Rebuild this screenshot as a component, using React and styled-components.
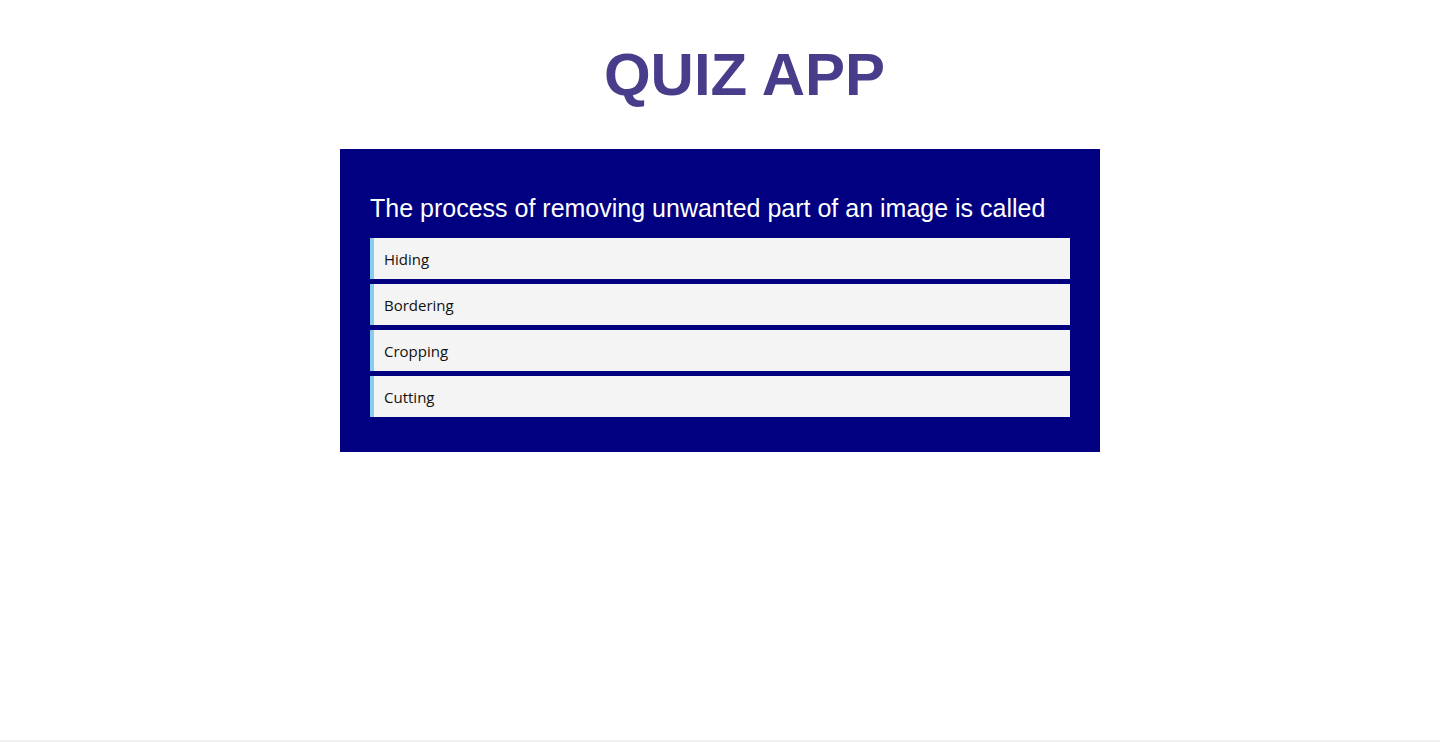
import React from 'react'
import styled, { createGlobalStyle } from 'styled-components'

const GlobalStyle = createGlobalStyle`
    body {
        margin: 0;
        background: #fff;
        font-family: "Liberation Sans", Arial, sans-serif;
    }
`

const options = ['Hiding', 'Bordering', 'Cropping', 'Cutting']

function App() {
    return (
        <Page>
            <GlobalStyle />
            <Title>QUIZ APP</Title>
            <Card>
                <Question>The process of removing unwanted part of an image is called</Question>
                <OptionList>
                    {options.map((o) => (
                        <Option key={o}>{o}</Option>
                    ))}
                </OptionList>
            </Card>
        </Page>
    )
}

const Page = styled.div`
    min-height: 100vh;
    box-sizing: border-box;
    border-bottom: 2px solid #f0f0f0;
    padding-top: 1px;
`

const Title = styled.h1`
    margin: 39px 0 40px;
    padding-left: 49px;
    text-align: center;
    font-family: "Liberation Sans", Arial, sans-serif;
    font-size: 60px;
    font-weight: bold;
    color: #483d8b;
`

const Card = styled.div`
    width: 760px;
    margin: 0 auto;
    box-sizing: border-box;
    padding: 30px 30px 35px;
    background: #000080;
`

const Question = styled.h2`
    margin: 15px 0 15px;
    font-family: "Liberation Sans", Arial, sans-serif;
    font-size: 25px;
    font-weight: normal;
    color: #fff;
`

const OptionList = styled.div`
    display: flex;
    flex-direction: column;
    gap: 5px;
`

const Option = styled.div`
    height: 41px;
    box-sizing: border-box;
    display: flex;
    align-items: center;
    padding: 0 10px;
    background: #f4f4f4;
    border-left: 4px solid #87ceeb;
    font-family: "Open Sans", "Noto Sans", sans-serif;
    font-size: 15px;
    color: #111;
    cursor: pointer;
`

export default App
